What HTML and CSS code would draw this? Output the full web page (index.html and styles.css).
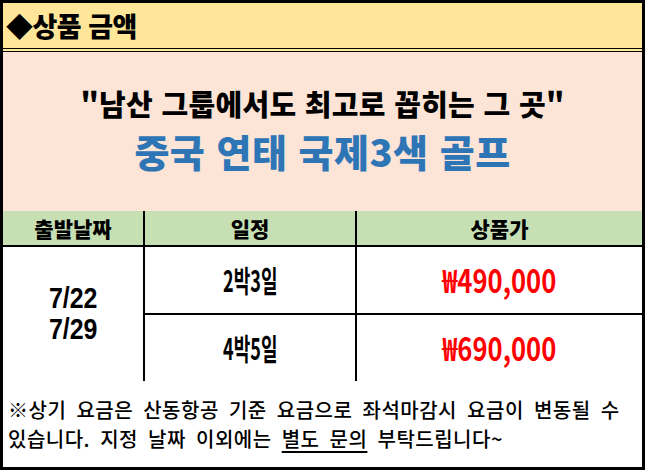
FILE: index.html
```html
<!DOCTYPE html>
<html lang="ko">
<head>
<meta charset="utf-8">
<link rel="stylesheet" href="styles.css">
</head>
<body>
<div class="frame">
  <div class="head">◆상품 금액</div>
  <div class="intro">
    <div class="line1">"남산 그룹에서도 최고로 꼽히는 그 곳"</div>
    <div class="line2">중국 연태 국제3색 골프</div>
  </div>
  <table class="price">
    <colgroup><col class="c1"><col class="c2"><col class="c3"></colgroup>
    <thead>
      <tr><th>출발날짜</th><th>일정</th><th>상품가</th></tr>
    </thead>
    <tbody>
      <tr>
        <td rowspan="2" class="date"><span class="cond dt">7/22<br>7/29</span></td>
        <td class="sched"><span class="cond sc">2박3일</span></td>
        <td class="amt"><span class="cond am">₩490,000</span></td>
      </tr>
      <tr>
        <td class="sched"><span class="cond sc">4박5일</span></td>
        <td class="amt"><span class="cond am">₩690,000</span></td>
      </tr>
    </tbody>
  </table>
  <div class="note">
    <p>※상기 요금은 산동항공 기준 요금으로 좌석마감시 요금이 변동될 수</p>
    <p>있습니다. 지정 날짜 이외에는 <u>별도 문의</u> 부탁드립니다~</p>
  </div>
</div>
</body>
</html>
```

FILE: styles.css
```css
html, body {
  margin: 0;
  padding: 0;
  background: #fff;
}
.frame {
  width: 645px;
  height: 470px;
  box-sizing: border-box;
  border: 3px solid #000;
  display: flex;
  flex-direction: column;
  font-family: "Noto Sans CJK KR", "Noto Sans", sans-serif;
  color: #000;
  overflow: hidden;
}
.head {
  height: 45px;
  background: #FFE699;
  border-bottom: 4px double #000;
  font-size: 27px;
  font-weight: 900;
  line-height: 45px;
  padding-left: 3px;
  letter-spacing: -0.5px;
}
.intro {
  height: 159px;
  background: #FCE4D6;
  display: flex;
  flex-direction: column;
  align-items: center;
  justify-content: center;
  padding-bottom: 8px;
  box-sizing: border-box;
}
.line1 {
  font-size: 29px;
  font-weight: 900;
  line-height: 46px;
  letter-spacing: 0.3px;
}
.line2 {
  font-size: 38px;
  font-weight: 900;
  color: #2E75B6;
  line-height: 50px;
  letter-spacing: 0.5px;
}
.price {
  width: 100%;
  border-collapse: collapse;
  table-layout: fixed;
  border-style: hidden;
}
.price col.c1 { width: 141px; }
.price col.c2 { width: 212px; }
.price th, .price td {
  border: 2px solid #000;
  padding: 0;
  text-align: center;
  vertical-align: middle;
}
.price tr:first-child th { border-top: 2px solid #000; }
.price th {
  height: 34px;
  background: #C6E0B4;
  font-size: 21px;
  font-weight: 900;
  line-height: 34px;
}
.price tbody td {
  height: 66px;
}
.cond {
  display: inline-block;
  font-weight: 700;
}
.dt {
  font-family: "Liberation Sans", "Noto Sans", sans-serif;
  font-size: 29px;
  line-height: 31px;
  transform: scaleX(0.86);
}
.sc {
  font-size: 30px;
  line-height: 32px;
  transform: scaleX(0.6);
}
.am {
  font-size: 32px;
  line-height: 32px;
  color: #FF0000;
  transform: scaleX(0.8);
}
.note {
  flex: 1;
  display: flex;
  flex-direction: column;
  justify-content: center;
  padding-left: 5px;
  font-size: 20px;
  font-weight: 500;
}
.note p {
  margin: 0;
  line-height: 29px;
  white-space: nowrap;
  word-spacing: 4px;
  letter-spacing: 0.5px;
}
.note u {
  text-underline-offset: 4px;
}
```
